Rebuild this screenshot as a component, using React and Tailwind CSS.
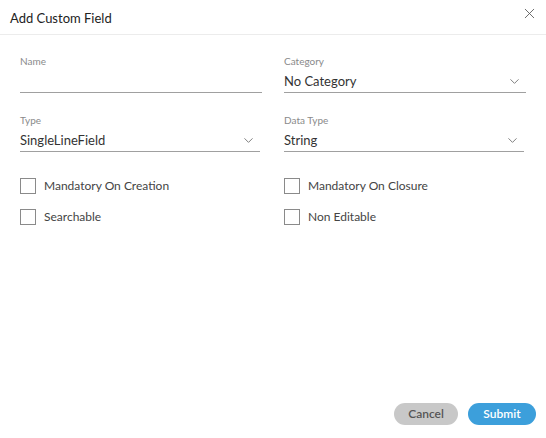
import { ChevronDown, X } from 'lucide-react';

function Field({ label, value, select, width }) {
  return (
    <div className={width}>
      <p className="text-[10px] leading-[14px] text-[#8a8a8a]">{label}</p>
      <div className="flex items-center justify-between h-[25px] border-b border-[#a0a0a0] pr-1 pt-[3px]">
        <span className="text-[13px] text-[#333]">{value}</span>
        {select && <ChevronDown size={15} strokeWidth={1.5} className="text-[#777]" />}
      </div>
    </div>
  );
}

function Check({ label }) {
  return (
    <label className="flex items-center gap-2 h-4">
      <span className="w-4 h-4 border border-[#8a8a8a] bg-white" />
      <span className="text-[12px] text-[#444]">{label}</span>
    </label>
  );
}

export default function App() {
  return (
    <div className="w-[546px] h-[438px] bg-white flex flex-col font-['Lato','Noto_Sans',sans-serif]">
      {/* Header */}
      <div className="h-[35px] flex items-center justify-between pl-[10px] pr-[8px] border-b border-[#ececec]">
        <h2 className="text-[13px] text-[#222] mt-[3px]">Add Custom Field</h2>
        <X size={17} strokeWidth={1.2} className="text-[#555] -mt-[7px]" />
      </div>

      {/* Body */}
      <div className="flex-1 px-[20px] pt-[19px]">
        <div className="flex justify-between">
          <Field label="Name" value="" width="w-[242px]" />
          <Field label="Category" value="No Category" select width="w-[242px]" />
        </div>
        <div className="flex justify-between mt-[20px] pr-[2px]">
          <Field label="Type" value="SingleLineField" select width="w-[240px]" />
          <Field label="Data Type" value="String" select width="w-[240px]" />
        </div>
        <div className="grid grid-cols-2 gap-x-[22px] gap-y-[15px] mt-[26px]">
          <Check label="Mandatory On Creation" />
          <Check label="Mandatory On Closure" />
          <Check label="Searchable" />
          <Check label="Non Editable" />
        </div>
      </div>

      {/* Footer */}
      <div className="flex justify-end gap-[10px] px-[10px] pb-[13px]">
        <button className="h-[22px] w-[64px] rounded-full bg-[#c8c8c8] text-[12px] font-semibold text-[#555]">Cancel</button>
        <button className="h-[22px] w-[68px] rounded-full bg-[#3c9fdb] text-[12px] font-semibold text-white">Submit</button>
      </div>
    </div>
  );
}
